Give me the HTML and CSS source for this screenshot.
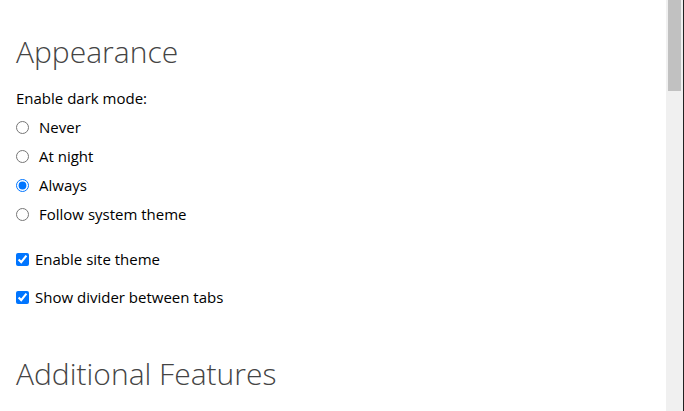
FILE: index.html
```html
<!DOCTYPE html>
<html lang="en">
<head>
    <meta charset="UTF-8">
    <title>Settings</title>
    <link rel="stylesheet" href="styles.css">
</head>
<body>
    <div class="page">
        <div class="content">
            <h2 class="section-title">Appearance</h2>

            <div class="field-label">Enable dark mode:</div>
            <div class="radio-list">
                <label class="radio-row"><input type="radio" name="dark"> <span>Never</span></label>
                <label class="radio-row"><input type="radio" name="dark"> <span>At night</span></label>
                <label class="radio-row"><input type="radio" name="dark" checked> <span>Always</span></label>
                <label class="radio-row"><input type="radio" name="dark"> <span>Follow system theme</span></label>
            </div>

            <label class="check-row"><input type="checkbox" checked> <span>Enable site theme</span></label>
            <label class="check-row"><input type="checkbox" checked> <span>Show divider between tabs</span></label>

            <h2 class="section-title section-next">Additional Features</h2>
        </div>

        <div class="scrollbar">
            <div class="scroll-thumb"></div>
        </div>
    </div>
</body>
</html>
```

FILE: styles.css
```css
* {
    margin: 0;
    padding: 0;
    box-sizing: border-box;
}

html, body {
    height: 100%;
    overflow: hidden;
}

body {
    font-family: "Segoe UI", "Open Sans", "Noto Sans", sans-serif;
    font-size: 15px;
    color: #000;
    background: #fff;
}

.page {
    display: flex;
    height: 100%;
}

.content {
    flex: 1;
    padding: 30px 16px 0 16px;
}

.section-title {
    font-size: 30px;
    font-weight: 300;
    color: #444;
    line-height: 44px;
    margin-bottom: 14px;
}

.section-next {
    margin-top: 45px;
}

.field-label {
    line-height: 20px;
    margin-bottom: 9px;
}

.radio-list {
    display: flex;
    flex-direction: column;
    gap: 9px;
    margin-bottom: 25px;
}

.radio-row,
.check-row {
    display: flex;
    align-items: center;
    line-height: 20px;
}

.radio-row input {
    width: 13px;
    height: 13px;
    margin: 0 10px 0 0;
}

.check-row {
    margin-bottom: 18px;
}

.check-row input {
    width: 13px;
    height: 13px;
    margin: 0 6px 0 0;
}

.scrollbar {
    width: 18px;
    background: #f0f0f0;
    padding: 0 2px;
    border-right: 1px solid #222;
}

.scroll-thumb {
    height: 91px;
    background: #c1c1c1;
}
```
